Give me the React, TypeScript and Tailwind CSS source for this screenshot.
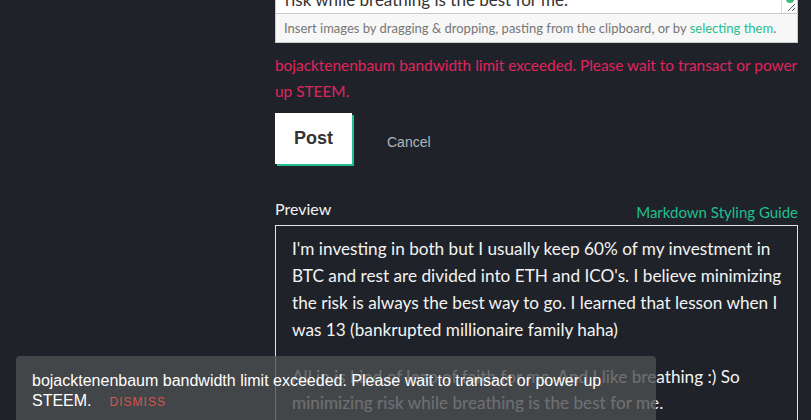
import React from "react";

const sans = { fontFamily: "Lato, 'Noto Sans', sans-serif" };
const arial = { fontFamily: "'Liberation Sans', Arial, sans-serif" };

export default function App() {
  const lines1 = [
    "I'm investing in both but I usually keep 60% of my investment in",
    "BTC and rest are divided into ETH and ICO's. I believe minimizing",
    "the risk is always the best way to go. I learned that lesson when I",
    "was 13 (bankrupted millionaire family haha)",
  ];
  const lines2 = [
    "All in is kind of leap of faith for me. And I like breathing :) So",
    "minimizing risk while breathing is the best for me.",
  ];
  return (
    <div className="relative h-[420px] w-[811px] overflow-hidden bg-[#1f2329]" style={sans}>
      <div className="ml-[275px] w-[523px]">
        {/* textarea */}
        <div className="relative -mt-[20px] h-[34px] overflow-hidden border border-[#cacaca] bg-white">
          <div className="whitespace-nowrap px-[9px] pt-[6px] text-[17px] leading-[26px] text-[#333]">
            risk while breathing is the best for me.
          </div>
          <div className="absolute right-[15px] top-0 h-full w-px bg-[#d8d8d8]" />
          <div className="absolute right-[3px] top-[14px] h-[8px] w-[8px] rounded-full bg-[#3fb97a]" />
          <svg className="absolute bottom-[1px] right-[1px]" width="9" height="9" viewBox="0 0 9 9">
            <path d="M8 1 L1 8 M8 5 L5 8" stroke="#666" strokeWidth="1" />
          </svg>
        </div>
        {/* dropzone */}
        <div className="h-[29px] whitespace-nowrap border border-t-0 border-[#cacaca] bg-[#f7f7f7] pl-[8px] text-[13px] leading-[28px] text-[#767676]">
          Insert images by dragging &amp; dropping, pasting from the clipboard, or by{" "}
          <span className="text-[#1fbf8f]">selecting them</span>.
        </div>
        {/* error */}
        <div className="mt-[9px] whitespace-nowrap text-[15.4px] leading-[26px] text-[#e0245e]">
          bojacktenenbaum bandwidth limit exceeded. Please wait to transact or power
          <br />
          up STEEM.
        </div>
        {/* buttons */}
        <div className="mt-[9px] flex items-center">
          <button
            className="h-[51px] w-[77px] bg-white text-[18px] font-bold text-[#333] shadow-[2px_2px_0_#1fbf8f]"
            style={arial}
          >
            Post
          </button>
          <span className="ml-[35px] mt-[8px] text-[14px] text-[#b2b6bb]" style={arial}>
            Cancel
          </span>
        </div>
        {/* preview header */}
        <div className="mt-[35px] flex items-end justify-between">
          <span className="text-[16px] leading-[20px] text-[#f2f2f2]">Preview</span>
          <span className="translate-y-[3px] text-[15px] leading-[20px] text-[#1fbf8f]">
            Markdown Styling Guide
          </span>
        </div>
        <div className="mt-[6px] h-[300px] border border-[#e3e3e3] px-[16px] pt-[9px] text-[17.2px] leading-[27px] text-[#f3f3f3]">
          <div>
            {lines1.map((l) => (
              <div key={l} className="whitespace-nowrap">{l}</div>
            ))}
          </div>
          <div className="mt-[21px] leading-[26px]">
            {lines2.map((l) => (
              <div key={l} className="whitespace-nowrap">{l}</div>
            ))}
          </div>
        </div>
      </div>
      {/* toast */}
      <div
        className="absolute left-[16px] top-[356px] h-[90px] w-[640px] rounded-[4px] bg-[rgba(76,79,81,0.8)] px-[16px] pt-[15px] text-[16px] leading-[20px] text-white"
        style={arial}
      >
        bojacktenenbaum bandwidth limit exceeded. Please wait to transact or power up
        <br />
        STEEM.
        <span className="ml-[18px] text-[12px] tracking-[1px] text-[#d9534f]">DISMISS</span>
      </div>
    </div>
  );
}
